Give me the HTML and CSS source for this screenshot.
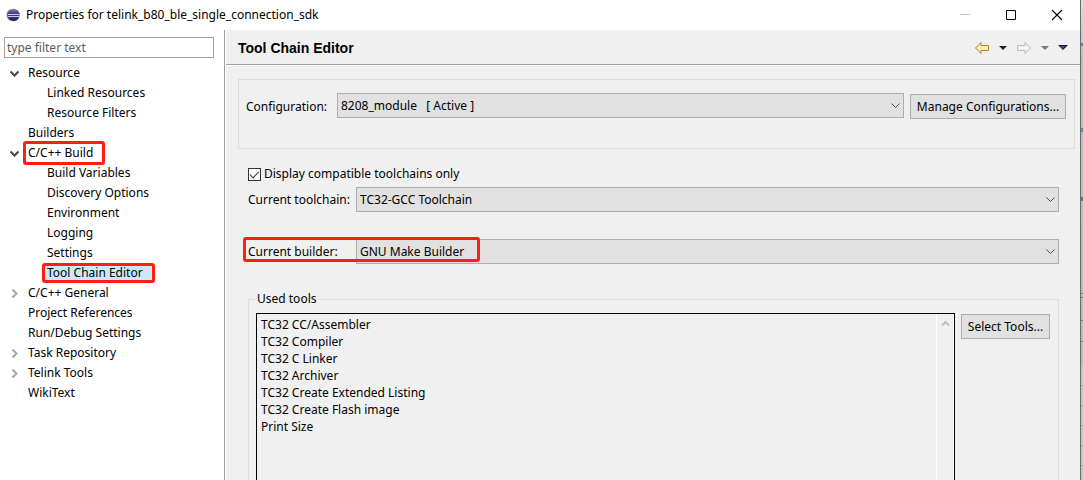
FILE: index.html
```html
<!DOCTYPE html>
<html lang="en">
<head>
<meta charset="utf-8">
<title>Properties for telink_b80_ble_single_connection_sdk</title>
<link rel="stylesheet" href="styles.css">
</head>
<body>
<div class="dialog">
  <header class="titlebar">
    <svg class="app-icon" width="14" height="14" viewBox="0 0 14 14" aria-hidden="true">
      <defs><linearGradient id="orb" x1="0" y1="0" x2="0" y2="1"><stop offset="0" stop-color="#8780b8"/><stop offset=".4" stop-color="#3d3582"/><stop offset="1" stop-color="#2b2560"/></linearGradient></defs>
      <path d="M5 .8A6.500 6.500 0 0 0 5 13.200A8 8 0 0 1 5 .8z" fill="#e59a62"/>
      <circle cx="7.500" cy="7" r="6.200" fill="url(#orb)"/>
      <path d="M2 6.500h11.500M2 8.500h11.500" stroke="#c9cdf0" stroke-width="1"/>
    </svg>
    <span class="title">Properties for telink_b80_ble_single_connection_sdk</span>
    <div class="window-buttons">
      <button class="window-button" aria-label="Minimize" disabled><svg width="12" height="12" viewBox="0 0 12 12"><path d="M1 5.500h10" stroke="#c8c8c8"/></svg></button>
      <button class="window-button" aria-label="Maximize"><svg width="12" height="12" viewBox="0 0 12 12"><path d="M1.500 1.500h9v9h-9z" fill="none" stroke="#000"/></svg></button>
      <button class="window-button" aria-label="Close"><svg width="12" height="12" viewBox="0 0 12 12"><path d="M1 1l10 10M11 1L1 11" stroke="#000" stroke-width="1.100"/></svg></button>
    </div>
  </header>
  <div class="body">
    <nav class="sidebar">
      <input class="filter" type="text" placeholder="type filter text" aria-label="Filter">
      <ul class="tree">
        <li class="node open"><svg class="twisty" width="9" height="9" viewBox="0 0 9 9"><path d="M.5 2.500l4 4 4-4" /></svg><span>Resource</span></li>
        <li class="node child"><span>Linked Resources</span></li>
        <li class="node child"><span>Resource Filters</span></li>
        <li class="node"><span>Builders</span></li>
        <li class="node open"><svg class="twisty" width="9" height="9" viewBox="0 0 9 9"><path d="M.5 2.500l4 4 4-4" /></svg><span class="marked">C/C++ Build</span></li>
        <li class="node child"><span>Build Variables</span></li>
        <li class="node child"><span>Discovery Options</span></li>
        <li class="node child"><span>Environment</span></li>
        <li class="node child"><span>Logging</span></li>
        <li class="node child"><span>Settings</span></li>
        <li class="node child"><span class="marked selected">Tool Chain Editor</span></li>
        <li class="node"><svg class="twisty" width="9" height="9" viewBox="0 0 9 9"><path d="M2.500 .5l4 4-4 4" /></svg><span>C/C++ General</span></li>
        <li class="node"><span>Project References</span></li>
        <li class="node"><span>Run/Debug Settings</span></li>
        <li class="node"><svg class="twisty" width="9" height="9" viewBox="0 0 9 9"><path d="M2.500 .5l4 4-4 4" /></svg><span>Task Repository</span></li>
        <li class="node"><svg class="twisty" width="9" height="9" viewBox="0 0 9 9"><path d="M2.500 .5l4 4-4 4" /></svg><span>Telink Tools</span></li>
        <li class="node"><span>WikiText</span></li>
      </ul>
    </nav>
    <main class="page">
      <div class="page-header">
        <h1 class="page-title">Tool Chain Editor</h1>
        <div class="history">
          <button class="tool" aria-label="Back"><svg width="16" height="14" viewBox="0 0 16 14"><path d="M1.500 7L7 1.500V4.500h7.500v5H7v3z" fill="#fdeeb5" stroke="#b87a1c" stroke-linejoin="round"/></svg></button>
          <button class="tool" aria-label="Back history"><svg width="8" height="4" viewBox="0 0 8 4"><path d="M0 0h8L4 4z" fill="#222"/></svg></button>
          <button class="tool" aria-label="Forward"><svg width="16" height="14" viewBox="0 0 16 14"><path d="M14.500 7L9 1.500V4.500H1.500v5H9v3z" fill="#f4f4f0" stroke="#bbb" stroke-linejoin="round"/></svg></button>
          <button class="tool" aria-label="Forward history"><svg width="8" height="4" viewBox="0 0 8 4"><path d="M0 0h8L4 4z" fill="#777"/></svg></button>
          <button class="tool" aria-label="Menu"><svg width="10" height="5" viewBox="0 0 10 5"><path d="M0 0h10L5 5z" fill="#15123c"/><path d="M2 1h5L5 4z" fill="#4a4590"/></svg></button>
        </div>
      </div>
      <div class="content">
        <section class="config">
          <label for="configuration">Configuration:</label>
          <div class="combo">
            <select id="configuration"><option>8208_module&nbsp;&nbsp; [ Active ]</option></select>
            <svg class="arrow" width="9" height="6" viewBox="0 0 9 6"><path d="M.5 .5l4 4 4-4"/></svg>
          </div>
          <button class="button manage">Manage Configurations...</button>
        </section>
        <section class="toolchain">
          <label class="check"><input type="checkbox" checked><span>Display compatible toolchains only</span></label>
          <div class="field">
            <label for="toolchain">Current toolchain:</label>
            <div class="combo">
              <select id="toolchain"><option>TC32-GCC Toolchain</option></select>
              <svg class="arrow" width="9" height="6" viewBox="0 0 9 6"><path d="M.5 .5l4 4 4-4"/></svg>
            </div>
          </div>
          <div class="field highlighted">
            <label for="builder">Current builder:</label>
            <div class="combo">
              <select id="builder"><option>GNU Make Builder</option></select>
              <svg class="arrow" width="9" height="6" viewBox="0 0 9 6"><path d="M.5 .5l4 4 4-4"/></svg>
            </div>
          </div>
          <fieldset class="tools">
            <legend>Used tools</legend>
            <div class="tools-row">
              <div class="list">
                <ul class="items">
                  <li>TC32 CC/Assembler</li>
                  <li>TC32 Compiler</li>
                  <li>TC32 C Linker</li>
                  <li>TC32 Archiver</li>
                  <li>TC32 Create Extended Listing</li>
                  <li>TC32 Create Flash image</li>
                  <li>Print Size</li>
                </ul>
                <div class="scrollbar"><svg width="9" height="7" viewBox="0 0 9 7"><path d="M1 5.500l3.500-3.500 3.500 3.500" fill="none" stroke="#bfbfbf" stroke-width="2"/></svg></div>
              </div>
              <button class="button select-tools">Select Tools...</button>
            </div>
          </fieldset>
        </section>
      </div>
    </main>
  </div>
</div>
<div class="backdrop"></div>
</body>
</html>
```
FILE: styles.css
```css
*, *::before, *::after { box-sizing: border-box; }

body {
  margin: 0;
  height: 100vh;
  display: flex;
  overflow: hidden;
  background: #fff;
  color: #000;
  font: 12px/20px "Noto Sans", sans-serif;
}

button, input, select { font: inherit; color: inherit; }
ul { list-style: none; margin: 0; padding: 0; }
svg { display: block; flex: none; }

.dialog {
  flex: 1;
  min-width: 0;
  display: flex;
  flex-direction: column;
  border-right: 1px solid #6a6a6a;
}

.backdrop {
  width: 2px;
  background:
    linear-gradient(#4f9298, #4f9298) 0 43px / 2px 3px no-repeat,
    linear-gradient(#4f9298, #4f9298) 0 128px / 2px 4px no-repeat,
    linear-gradient(#3b8580, #3b8580) 0 197px / 2px 4px no-repeat,
    linear-gradient(#777, #777) 0 293px / 2px 1px no-repeat,
    linear-gradient(#777, #777) 0 297px / 2px 1px no-repeat,
    linear-gradient(#777, #777) 0 320px / 2px 1px no-repeat,
    linear-gradient(#777, #777) 0 341px / 2px 1px no-repeat,
    repeating-linear-gradient(#c4c6c6 0 19px, #9fa1a1 19px 20px) 0 366px / 2px 120px no-repeat,
    linear-gradient(#e0e0e0, #b9bcbc 60px, #bbbdbd);
}

.titlebar {
  display: flex;
  align-items: center;
  height: 30px;
  padding-left: 6px;
  gap: 6px;
  background: #fff;
}
.title { flex: 1; }
.window-buttons { display: flex; }
.window-button {
  display: grid;
  place-items: center;
  width: 46px;
  height: 28px;
  padding: 0;
  border: 0;
  background: none;
}

.body { flex: 1; display: flex; min-height: 0; }

.sidebar {
  width: 225px;
  flex: none;
  padding: 7px 10px 0 4px;
  border-right: 1px solid #a0a0a0;
  background: #fff;
}
.filter {
  display: block;
  width: 100%;
  height: 21px;
  padding: 0 2px;
  border: 1px solid #a0a0a0;
  background: #fff;
}
.filter::placeholder { color: #5c5c5c; opacity: 1; }

.tree { padding: 5px 0 0 6px; }
.node {
  display: flex;
  align-items: center;
  height: 20px;
  padding-left: 18px;
  white-space: nowrap;
}
.node.child { padding-left: 37px; }
.twisty {
  margin: 0 9px 0 -18px;
  fill: none;
  stroke: #a6a6a6;
  stroke-width: 2;
}
.open .twisty { stroke: #484848; }
.marked {
  margin-left: -5px;
  padding: 0 9px 0 2px;
  border: 3px solid #ff1f10;
  border-radius: 3px;
  line-height: 18px;
}
.selected { background: #cce8ff; line-height: 14px; }

.page {
  flex: 1;
  min-width: 0;
  display: flex;
  flex-direction: column;
  border-left: 1px solid #fff;
  background: #f0f0f0;
}
.page-header {
  display: flex;
  align-items: center;
  justify-content: space-between;
  height: 36px;
  flex: none;
  padding: 0 12px;
  border-bottom: 1px solid #fff;
  box-shadow: inset 0 -1px #a0a0a0;
}
.page-title { margin: 0; font: bold 14px/20px "Liberation Sans", Arial, sans-serif; }
.history { display: flex; align-items: center; gap: 9px; }
.tool { padding: 0; border: 0; background: none; }

.content {
  flex: 1;
  min-height: 0;
  display: flex;
  flex-direction: column;
  padding: 13px 5px 0 12px;
}

.config {
  display: flex;
  align-items: flex-start;
  gap: 6px;
  height: 70px;
  flex: none;
  padding: 13px 8px 0 7px;
  border: 1px solid #dcdcdc;
}
.config label { width: 85px; line-height: 28px; }

.combo { position: relative; flex: 1; min-width: 0; }
.combo select {
  display: block;
  appearance: none;
  width: 100%;
  height: 25px;
  padding: 0 24px 0 3px;
  border: 1px solid #adadad;
  border-radius: 0;
  background: #e1e1e1;
}
.arrow {
  position: absolute;
  right: 4px;
  top: 10px;
  pointer-events: none;
  fill: none;
  stroke: #484848;
}

.button {
  height: 25px;
  flex: none;
  margin-top: 1px;
  padding: 0;
  border: 1px solid #adadad;
  background: #e1e1e1;
  line-height: 20px;
  white-space: nowrap;
}
.manage { width: 156px; }
.select-tools { width: 89px; }

.toolchain {
  flex: 1;
  min-height: 0;
  display: flex;
  flex-direction: column;
  padding: 15px 16px 0 10px;
}
.check { display: flex; align-items: center; gap: 3px; height: 20px; }
.check input {
  appearance: none;
  display: grid;
  width: 13px;
  height: 13px;
  margin: 0;
  border: 1px solid #333;
  background: #fff;
}
.check input:checked::before {
  content: "";
  width: 9px;
  height: 5px;
  margin: 2px 1px;
  border: solid #333;
  border-width: 0 0 1px 1px;
  transform: rotate(-45deg);
}

.field { position: relative; display: flex; align-items: center; margin-top: 3px; }
.field label { width: 108px; white-space: nowrap; }
.highlighted { margin-top: 27px; }
.highlighted::after {
  content: "";
  position: absolute;
  left: -5px;
  top: -2px;
  width: 237px;
  height: 25px;
  border: 3px solid #ff1f10;
  border-radius: 3px;
  pointer-events: none;
}

.tools {
  flex: 1;
  min-width: 0;
  min-height: 0;
  margin: 25px 0 0;
  padding: 0 8px 0 7px;
  border: 1px solid #dcdcdc;
  border-bottom: 0;
}
.tools legend { margin: 0; padding: 0 2px 0 1px; }
.tools-row { display: flex; align-items: flex-start; gap: 6px; height: 100%; padding-top: 4px; }
.list {
  display: flex;
  flex: 1;
  align-self: stretch;
  border: 1px solid #000;
  border-bottom: 0;
}
.items { flex: 1; padding: 2px 4px; line-height: 17px; }
.scrollbar {
  width: 18px;
  display: flex;
  justify-content: center;
  padding-top: 6px;
  border-left: 1px solid #fff;
  border-right: 1px solid #fff;
}
```
